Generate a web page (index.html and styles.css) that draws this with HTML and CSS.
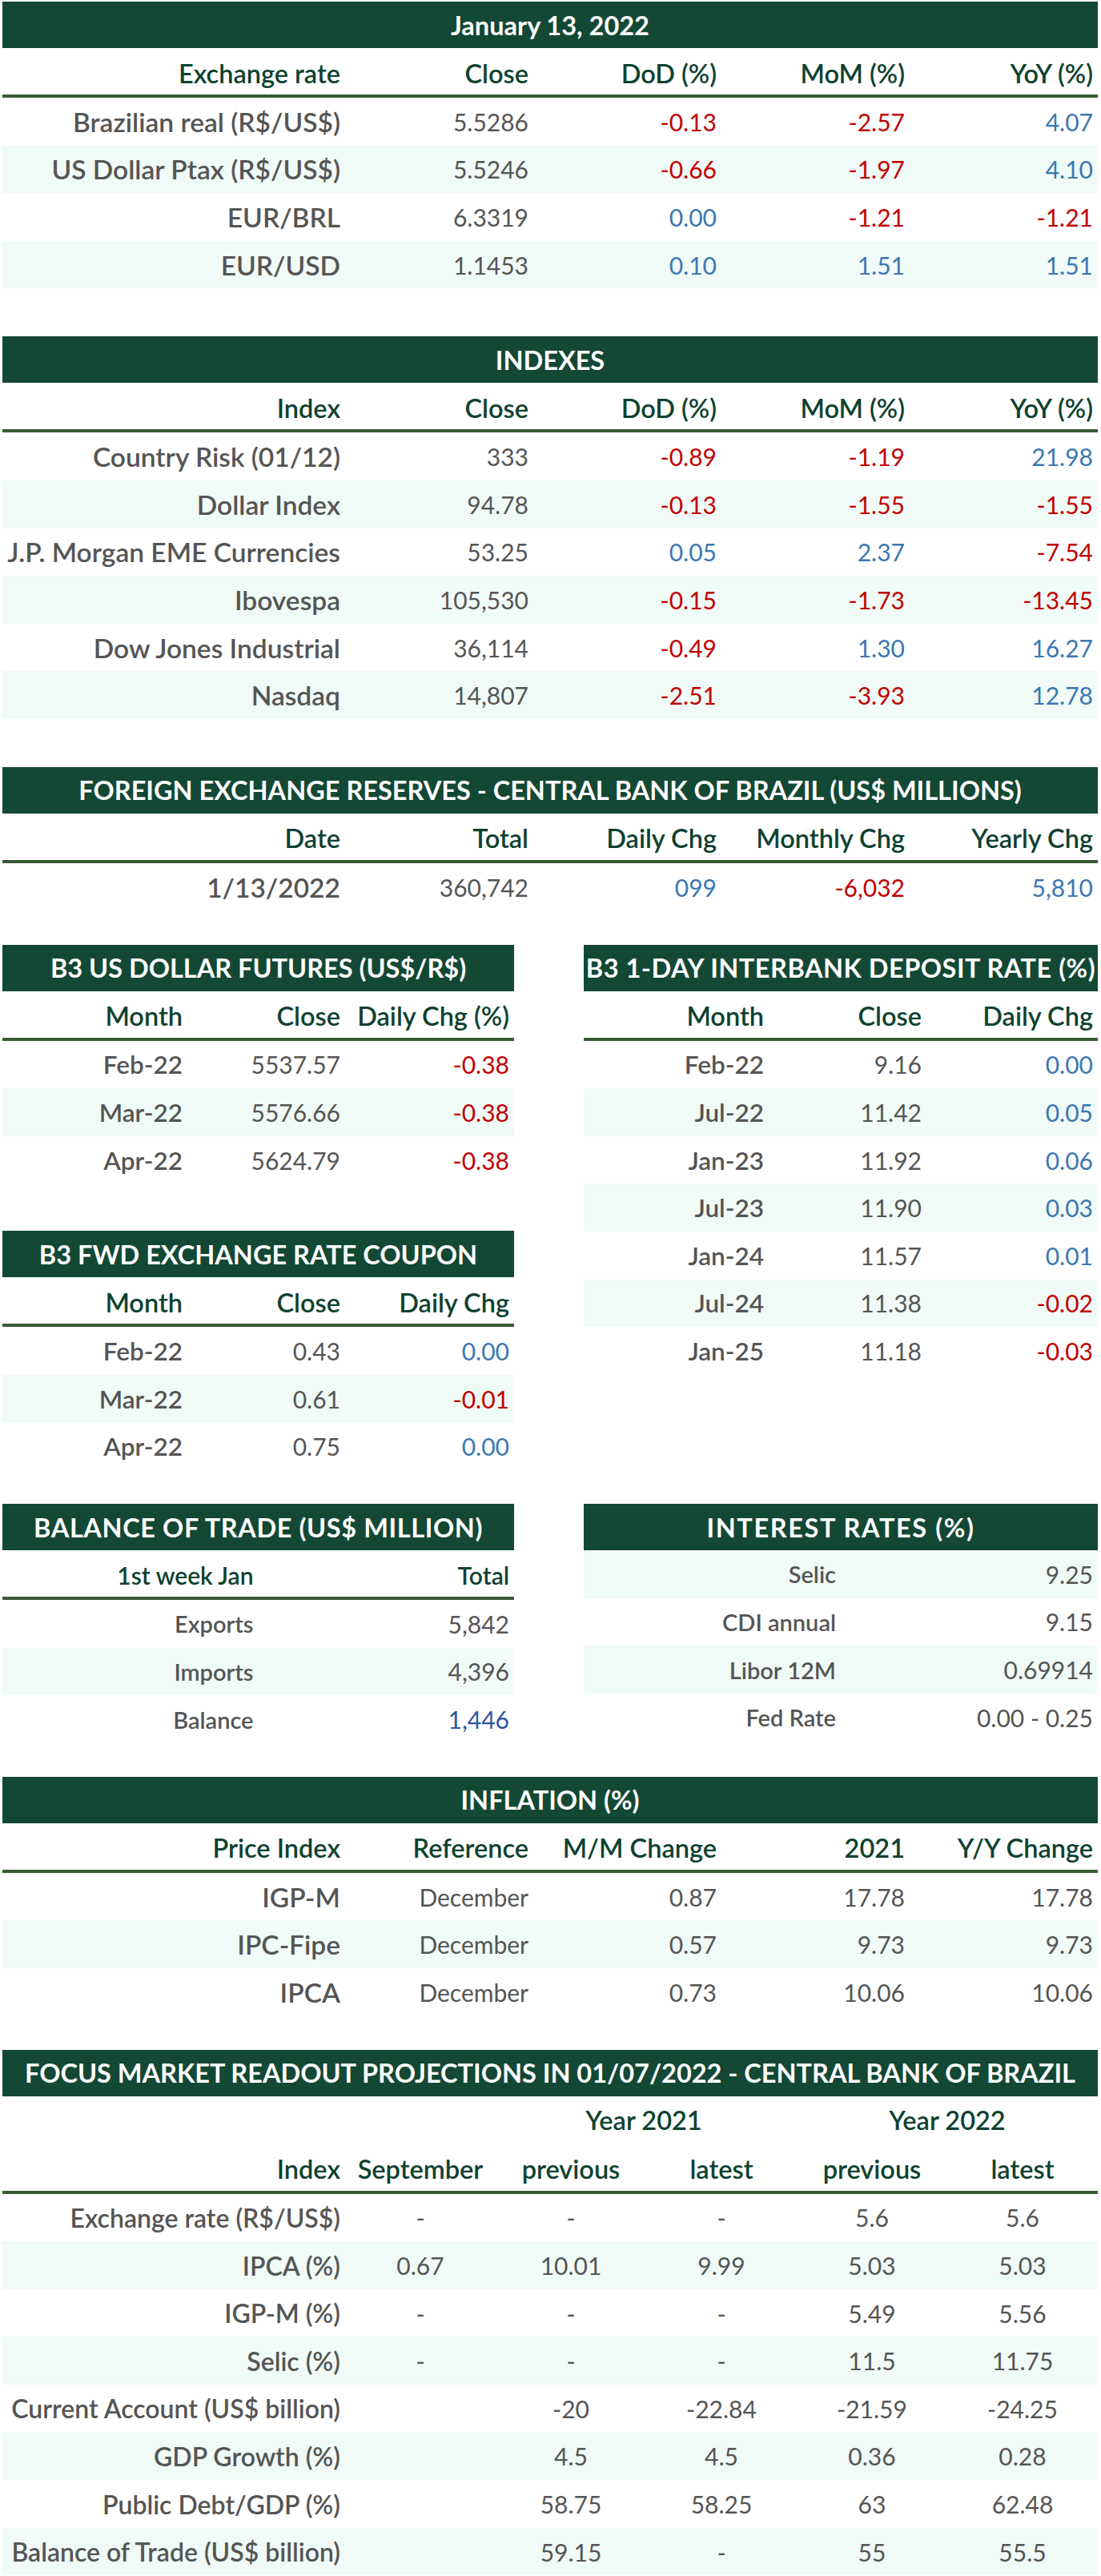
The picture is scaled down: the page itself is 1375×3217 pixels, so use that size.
FILE: index.html
```html
<!DOCTYPE html>
<html lang="en">
<head>
<meta charset="utf-8">
<title>Market Summary - January 13, 2022</title>
<link rel="stylesheet" href="styles.css">
</head>
<body>
<main class="page">

  <section class="tbl cols5">
    <div class="band">January 13, 2022</div>
    <div class="row head"><span>Exchange rate</span><span>Close</span><span>DoD (%)</span><span>MoM (%)</span><span>YoY (%)</span></div>
    <div class="row"><span class="lbl">Brazilian real (R$/US$)</span><span>5.5286</span><span class="neg">-0.13</span><span class="neg">-2.57</span><span class="pos">4.07</span></div>
    <div class="row alt"><span class="lbl">US Dollar Ptax (R$/US$)</span><span>5.5246</span><span class="neg">-0.66</span><span class="neg">-1.97</span><span class="pos">4.10</span></div>
    <div class="row"><span class="lbl">EUR/BRL</span><span>6.3319</span><span class="pos">0.00</span><span class="neg">-1.21</span><span class="neg">-1.21</span></div>
    <div class="row alt"><span class="lbl">EUR/USD</span><span>1.1453</span><span class="pos">0.10</span><span class="pos">1.51</span><span class="pos">1.51</span></div>
  </section>

  <section class="tbl cols5 sp-lg">
    <div class="band">INDEXES</div>
    <div class="row head"><span>Index</span><span>Close</span><span>DoD (%)</span><span>MoM (%)</span><span>YoY (%)</span></div>
    <div class="row"><span class="lbl">Country Risk (01/12)</span><span>333</span><span class="neg">-0.89</span><span class="neg">-1.19</span><span class="pos">21.98</span></div>
    <div class="row alt"><span class="lbl">Dollar Index</span><span>94.78</span><span class="neg">-0.13</span><span class="neg">-1.55</span><span class="neg">-1.55</span></div>
    <div class="row"><span class="lbl">J.P. Morgan EME Currencies</span><span>53.25</span><span class="pos">0.05</span><span class="pos">2.37</span><span class="neg">-7.54</span></div>
    <div class="row alt"><span class="lbl">Ibovespa</span><span>105,530</span><span class="neg">-0.15</span><span class="neg">-1.73</span><span class="neg">-13.45</span></div>
    <div class="row"><span class="lbl">Dow Jones Industrial</span><span>36,114</span><span class="neg">-0.49</span><span class="pos">1.30</span><span class="pos">16.27</span></div>
    <div class="row alt"><span class="lbl">Nasdaq</span><span>14,807</span><span class="neg">-2.51</span><span class="neg">-3.93</span><span class="pos">12.78</span></div>
  </section>

  <section class="tbl cols5 sp-lg">
    <div class="band">FOREIGN EXCHANGE RESERVES - CENTRAL BANK OF BRAZIL (US$ MILLIONS)</div>
    <div class="row head"><span>Date</span><span>Total</span><span>Daily Chg</span><span>Monthly Chg</span><span>Yearly Chg</span></div>
    <div class="row"><span class="lbl">1/13/2022</span><span>360,742</span><span class="pos">099</span><span class="neg">-6,032</span><span class="pos">5,810</span></div>
  </section>

  <div class="pair sp-md">
    <div class="stack">
      <section class="tbl cols3">
        <div class="band">B3 US DOLLAR FUTURES (US$/R$)</div>
        <div class="row head"><span>Month</span><span>Close</span><span>Daily Chg (%)</span></div>
        <div class="row"><span class="lbl">Feb-22</span><span>5537.57</span><span class="neg">-0.38</span></div>
        <div class="row alt"><span class="lbl">Mar-22</span><span>5576.66</span><span class="neg">-0.38</span></div>
        <div class="row"><span class="lbl">Apr-22</span><span>5624.79</span><span class="neg">-0.38</span></div>
      </section>
      <section class="tbl cols3">
        <div class="band">B3 FWD EXCHANGE RATE COUPON</div>
        <div class="row head"><span>Month</span><span>Close</span><span>Daily Chg</span></div>
        <div class="row"><span class="lbl">Feb-22</span><span>0.43</span><span class="pos">0.00</span></div>
        <div class="row alt"><span class="lbl">Mar-22</span><span>0.61</span><span class="neg">-0.01</span></div>
        <div class="row"><span class="lbl">Apr-22</span><span>0.75</span><span class="pos">0.00</span></div>
      </section>
    </div>
    <section class="tbl cols3">
      <div class="band band-interbank">B3 1-DAY INTERBANK DEPOSIT RATE (%)</div>
      <div class="row head"><span>Month</span><span>Close</span><span>Daily Chg</span></div>
      <div class="row"><span class="lbl">Feb-22</span><span>9.16</span><span class="pos">0.00</span></div>
      <div class="row alt"><span class="lbl">Jul-22</span><span>11.42</span><span class="pos">0.05</span></div>
      <div class="row"><span class="lbl">Jan-23</span><span>11.92</span><span class="pos">0.06</span></div>
      <div class="row alt"><span class="lbl">Jul-23</span><span>11.90</span><span class="pos">0.03</span></div>
      <div class="row"><span class="lbl">Jan-24</span><span>11.57</span><span class="pos">0.01</span></div>
      <div class="row alt"><span class="lbl">Jul-24</span><span>11.38</span><span class="neg">-0.02</span></div>
      <div class="row"><span class="lbl">Jan-25</span><span>11.18</span><span class="neg">-0.03</span></div>
    </section>
  </div>

  <div class="pair sp-md">
    <section class="tbl cols2">
      <div class="band band-trade">BALANCE OF TRADE (US$ MILLION)</div>
      <div class="row head"><span>1st week Jan</span><span>Total</span></div>
      <div class="row"><span class="lbl">Exports</span><span>5,842</span></div>
      <div class="row alt"><span class="lbl">Imports</span><span>4,396</span></div>
      <div class="row"><span class="lbl">Balance</span><span class="pos-dark">1,446</span></div>
    </section>
    <section class="tbl cols2">
      <div class="band band-rates">INTEREST RATES (%)</div>
      <div class="row alt"><span class="lbl">Selic</span><span>9.25</span></div>
      <div class="row"><span class="lbl">CDI annual</span><span>9.15</span></div>
      <div class="row alt"><span class="lbl">Libor 12M</span><span>0.69914</span></div>
      <div class="row"><span class="lbl">Fed Rate</span><span>0.00 - 0.25</span></div>
    </section>
  </div>

  <section class="tbl cols5 sp-md">
    <div class="band">INFLATION (%)</div>
    <div class="row head"><span>Price Index</span><span>Reference</span><span>M/M Change</span><span>2021</span><span>Y/Y Change</span></div>
    <div class="row"><span class="lbl">IGP-M</span><span>December</span><span>0.87</span><span>17.78</span><span>17.78</span></div>
    <div class="row alt"><span class="lbl">IPC-Fipe</span><span>December</span><span>0.57</span><span>9.73</span><span>9.73</span></div>
    <div class="row"><span class="lbl">IPCA</span><span>December</span><span>0.73</span><span>10.06</span><span>10.06</span></div>
  </section>

  <section class="tbl cols6 sp-md">
    <div class="band">FOCUS MARKET READOUT PROJECTIONS IN 01/07/2022 - CENTRAL BANK OF BRAZIL</div>
    <div class="row years"><span class="y2021">Year 2021</span><span class="y2022">Year 2022</span></div>
    <div class="row head"><span>Index</span><span>September</span><span>previous</span><span>latest</span><span>previous</span><span>latest</span></div>
    <div class="row"><span class="lbl">Exchange rate (R$/US$)</span><span>-</span><span>-</span><span>-</span><span>5.6</span><span>5.6</span></div>
    <div class="row alt"><span class="lbl">IPCA (%)</span><span>0.67</span><span>10.01</span><span>9.99</span><span>5.03</span><span>5.03</span></div>
    <div class="row"><span class="lbl">IGP-M (%)</span><span>-</span><span>-</span><span>-</span><span>5.49</span><span>5.56</span></div>
    <div class="row alt"><span class="lbl">Selic (%)</span><span>-</span><span>-</span><span>-</span><span>11.5</span><span>11.75</span></div>
    <div class="row"><span class="lbl">Current Account (US$ billion)</span><span></span><span>-20</span><span>-22.84</span><span>-21.59</span><span>-24.25</span></div>
    <div class="row alt"><span class="lbl">GDP Growth (%)</span><span></span><span>4.5</span><span>4.5</span><span>0.36</span><span>0.28</span></div>
    <div class="row"><span class="lbl">Public Debt/GDP (%)</span><span></span><span>58.75</span><span>58.25</span><span>63</span><span>62.48</span></div>
    <div class="row alt"><span class="lbl">Balance of Trade (US$ billion)</span><span></span><span>59.15</span><span>-</span><span>55</span><span>55.5</span></div>
  </section>

</main>
</body>
</html>
```

FILE: styles.css
```css
html, body {
  margin: 0;
  padding: 0;
  background: #ffffff;
}

.page {
  padding: 2px 4px 0 3px;
  font-family: "Lato", "Liberation Sans", sans-serif;
  color: #555555;
}

.tbl {
  display: flex;
  flex-direction: column;
}

.sp-lg { margin-top: 60px; }
.sp-md { margin-top: 42px; }

.band {
  height: 58px;
  background: #134835;
  color: #ffffff;
  font-weight: 700;
  font-size: 32.5px;
  display: flex;
  align-items: center;
  justify-content: center;
  white-space: nowrap;
}

.band-interbank { letter-spacing: 0.5px; }
.band-trade { letter-spacing: 0.6px; }
.band-rates { letter-spacing: 1.6px; }

.row {
  display: grid;
  align-items: center;
  height: 59.6px;
  font-size: 30px;
  white-space: nowrap;
}

.row > span {
  text-align: right;
  padding-right: 6px;
}

.row.alt {
  background: #f0faf6;
}

.row.head {
  border-bottom: 4px solid #3a5a36;
  color: #0f4230;
  font-weight: 600;
  font-size: 32.5px;
  padding-top: 4px;
  box-sizing: content-box;
  height: 54px;
}

.lbl {
  font-weight: 600;
  color: #555555;
}

.neg { color: #c00000; }
.pos { color: #3b78b2; }
.pos-dark { color: #30559e; }

.cols5 .row { grid-template-columns: 428px repeat(4, 235px); }
.cols5 .lbl { font-size: 33.5px; }

.cols3 .row { grid-template-columns: 231px 197px 1fr; }
.cols3 .lbl { font-size: 31.5px; }

.cols2 .row { grid-template-columns: 1fr 1fr; }
.cols2 .lbl { font-size: 29px; }
.cols2 .row.head { font-size: 30px; }

.cols6 .row { grid-template-columns: 428px repeat(5, 188px); }
.cols6 .row > span { text-align: center; padding-right: 0; }
.cols6 .row > span:first-child { text-align: right; padding-right: 6px; }
.cols6 .lbl { font-size: 32px; }

.row.years {
  height: 60px;
  color: #0f4230;
  font-weight: 600;
  font-size: 32.5px;
}
.row.years > span.y2021 { grid-column: 3 / span 2; text-align: center; }
.row.years > span.y2022 { grid-column: 5 / span 2; text-align: center; }

.pair {
  display: grid;
  grid-template-columns: 639px 1fr;
  column-gap: 87px;
  align-items: start;
}

.stack {
  display: flex;
  flex-direction: column;
  gap: 59px;
}
```
